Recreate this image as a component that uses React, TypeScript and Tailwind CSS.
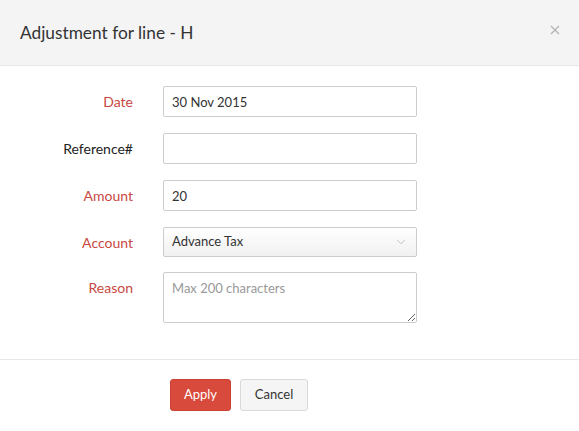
import { ChevronDown } from "lucide-react";

function Label({ text, required }: { text: string; required?: boolean }) {
  return (
    <div
      className={`text-right text-[14px] ${
        required ? "text-[#c8483f]" : "text-[#222]"
      }`}
    >
      {text}
    </div>
  );
}

export default function App() {
  return (
    <div className="w-[579px] h-[431px] bg-white font-['Lato','Open_Sans',sans-serif] text-[#333]">
      {/* Header */}
      <div className="h-[66px] bg-[#f4f4f4] border-b border-[#e8e8e8] flex items-center justify-between pl-[20px] pr-[19px]">
        <h2 className="text-[17.3px] text-[#333] font-normal">Adjustment for line - H</h2>
        <button className="text-[#b5b5b5] -mt-[6px]">
          <svg width="10" height="10" viewBox="0 0 10 10">
            <path d="M1 1L9 9M9 1L1 9" stroke="currentColor" strokeWidth="1.4" />
          </svg>
        </button>
      </div>

      {/* Body */}
      <div className="pt-[20px] pb-[36px] border-b border-[#e8e8e8]">
        <div className="grid grid-cols-[133px_254px] gap-x-[30px] items-center">
          <Label text="Date" required />
          <input
            defaultValue="30 Nov 2015"
            className="h-[31px] border border-[#ccc] rounded-[2px] px-[8px] text-[13px] text-[#333] outline-none"
          />
          <div className="col-span-2 h-[16px]" />
          <Label text="Reference#" />
          <input className="h-[31px] border border-[#ccc] rounded-[2px] px-[8px] text-[13px] outline-none" />
          <div className="col-span-2 h-[16px]" />
          <Label text="Amount" required />
          <input
            defaultValue="20"
            className="h-[31px] border border-[#ccc] rounded-[2px] px-[8px] text-[13px] text-[#333] outline-none"
          />
          <div className="col-span-2 h-[16px]" />
          <Label text="Account" required />
          <div className="h-[30px] border border-[#ccc] rounded-[2px] px-[8px] flex items-center justify-between bg-gradient-to-b from-white to-[#f1f1f1] text-[13px] text-[#333]">
            <span>Advance Tax</span>
            <ChevronDown size={14} strokeWidth={1.5} className="text-[#bbb]" />
          </div>
          <div className="col-span-2 h-[15px]" />
          <div className="self-start pt-[5px]">
            <Label text="Reason" required />
          </div>
          <textarea
            placeholder="Max 200 characters"
            className="h-[51px] border border-[#ccc] rounded-[2px] px-[8px] py-[6px] text-[13px] placeholder:text-[#999] outline-none resize-y"
          />
        </div>
      </div>

      {/* Footer */}
      <div className="pl-[170px] pt-[19px] flex gap-[9px]">
        <button className="h-[32px] w-[61px] rounded-[3px] bg-[#d84a3b] border border-[#c94234] text-white text-[13px]">
          Apply
        </button>
        <button className="h-[32px] w-[68px] rounded-[3px] bg-[#f5f5f5] border border-[#d9d9d9] text-[#333] text-[13px]">
          Cancel
        </button>
      </div>
    </div>
  );
}
